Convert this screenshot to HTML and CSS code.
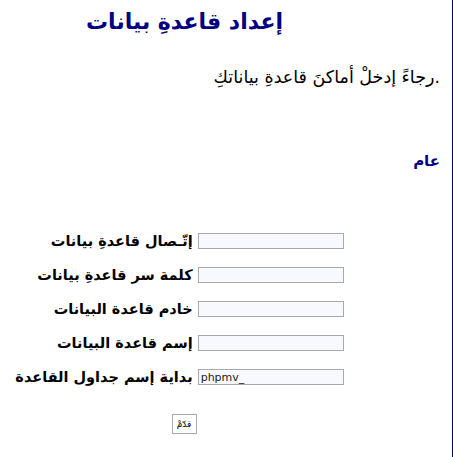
FILE: index.html
```html
<!DOCTYPE html>
<html lang="ar" dir="rtl">
<head>
  <meta charset="UTF-8" />
  <title>إعداد قاعدةِ بيانات</title>
  <link rel="stylesheet" href="styles.css">
</head>
<body>
  <div id="page">
    <h1 class="title">إعداد قاعدةِ بيانات</h1>
    <p class="intro">.رجاءً إدخلْ أماكنَ قاعدةِ بياناتكِ</p>
    <h2 class="section">عام</h2>
    <form class="setup">
      <table class="fields">
        <tr>
          <td class="label">إتّـصال قاعدةِ بيانات</td>
          <td><input type="text" name="db_login" /></td>
        </tr>
        <tr>
          <td class="label">كلمة سر قاعدةِ بيانات</td>
          <td><input type="password" name="db_password" /></td>
        </tr>
        <tr>
          <td class="label">خادم قاعدة البيانات</td>
          <td><input type="text" name="db_host" /></td>
        </tr>
        <tr>
          <td class="label">إسم قاعدة البيانات</td>
          <td><input type="text" name="db_name" /></td>
        </tr>
        <tr>
          <td class="label">بداية إسم جداول القاعدة</td>
          <td><input type="text" name="db_prefix" value="phpmv_" /></td>
        </tr>
      </table>
      <div class="submit"><button type="submit">قدّمْ</button></div>
    </form>
  </div>
</body>
</html>
```

FILE: styles.css
```css
body { margin: 0; background: white; font-family: "DejaVu Sans", Tahoma, sans-serif; }
#page { width: 452px; min-height: 457px; direction: rtl; box-sizing: border-box; border-right: 1px solid #000080; }
.title { margin: 0 84px 0 0; padding-top: 6px; text-align: center; font-size: 22px; color: #000080; font-weight: bold; line-height: 32px; }
.intro { margin: 27px 12px 0 0; font-size: 17.5px; line-height: 24px; color: black; }
.section { margin: 60px 12px 0 0; font-size: 15px; color: #000080; line-height: 24px; }
.setup { margin: 51px 94px 0 0; }
.fields { margin: 0 auto; border-collapse: collapse; direction: ltr; }
.fields td { padding: 0; height: 34px; }
.label { direction: rtl; text-align: right; font-size: 14.5px; font-weight: bold; color: black; padding-right: 5px !important; white-space: nowrap; }
.fields input { display: block; width: 146px; height: 16px; box-sizing: border-box; border: 1px solid #aaa; background: #f8f8ff; padding: 0 2px; font-family: Tahoma, "DejaVu Sans", sans-serif; font-size: 11px; text-align: left; color: #222; }
.submit { text-align: center; margin-top: 18px; padding-left: 9px; }
.submit button { width: 25px; height: 20px; padding: 0; border: 1px solid #aaa; background: white; font-size: 9px; font-family: "DejaVu Sans", sans-serif; }
```
